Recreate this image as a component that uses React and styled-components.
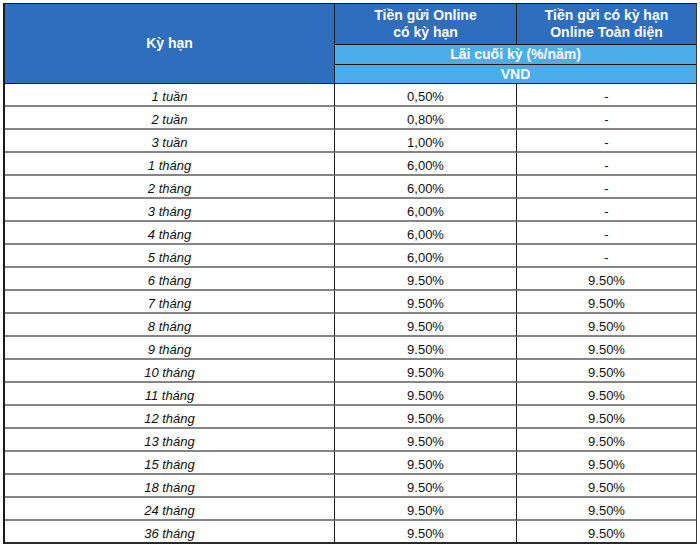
import React from 'react';
import styled, { createGlobalStyle } from 'styled-components';

const GlobalStyle = createGlobalStyle`
  html, body {
    margin: 0;
    padding: 0;
    background: #ffffff;
  }
  body {
    font-family: "Liberation Sans", Arial, sans-serif;
  }
`;

const Frame = styled.div`
  width: 700px;
  height: 548px;
  box-sizing: border-box;
  padding: 3px 4px 0 3px;
  background: #ffffff;
`;

const RateTable = styled.table`
  width: 694px;
  border-collapse: separate;
  border-spacing: 0;
  table-layout: fixed;
  border-top: 1px solid #1c1c1c;
  border-left: 2px solid #1c1c1c;
  border-right: 1px solid #3a3a3a;
`;

const HeadCell = styled.th`
  background: ${props => (props.$light ? '#4badea' : '#2e6ebd')};
  color: #ffffff;
  font-size: 14px;
  font-weight: bold;
  line-height: 17px;
  text-align: center;
  vertical-align: middle;
  padding: 0;
  border-bottom: 1px solid #1c1c1c;
  border-right: ${props => (props.$last ? '0' : '1px solid #1c1c1c')};
`;

const HeadRow = styled.tr`
  height: ${props => props.$h}px;
`;

const BodyRow = styled.tr`
  height: 23px;
`;

const Cell = styled.td`
  font-size: 13px;
  font-style: ${props => (props.$italic ? 'italic' : 'normal')};
  color: #111111;
  text-align: center;
  vertical-align: middle;
  padding: 4px 0 0;
  line-height: 15px;
  border-bottom: 2px solid ${props => (props.$end ? '#2a2a2a' : '#858585')};
  border-right: ${props => (props.$last ? '0' : '1px solid #1c1c1c')};
`;

const terms = [
  ['1 tuần', '0,50%', '-'],
  ['2 tuần', '0,80%', '-'],
  ['3 tuần', '1,00%', '-'],
  ['1 tháng', '6,00%', '-'],
  ['2 tháng', '6,00%', '-'],
  ['3 tháng', '6,00%', '-'],
  ['4 tháng', '6,00%', '-'],
  ['5 tháng', '6,00%', '-'],
  ['6 tháng', '9.50%', '9.50%'],
  ['7 tháng', '9.50%', '9.50%'],
  ['8 tháng', '9.50%', '9.50%'],
  ['9 tháng', '9.50%', '9.50%'],
  ['10 tháng', '9.50%', '9.50%'],
  ['11 tháng', '9.50%', '9.50%'],
  ['12 tháng', '9.50%', '9.50%'],
  ['13 tháng', '9.50%', '9.50%'],
  ['15 tháng', '9.50%', '9.50%'],
  ['18 tháng', '9.50%', '9.50%'],
  ['24 tháng', '9.50%', '9.50%'],
  ['36 tháng', '9.50%', '9.50%'],
];

const App = () => {
  return (
    <Frame>
      <GlobalStyle />
      <RateTable>
        <colgroup>
          <col style={{ width: 330 }} />
          <col style={{ width: 182 }} />
          <col />
        </colgroup>
        <thead>
          <HeadRow $h={41}>
            <HeadCell rowSpan={3}>Kỳ hạn</HeadCell>
            <HeadCell>Tiền gửi Online<br />có kỳ hạn</HeadCell>
            <HeadCell $last>Tiền gửi có kỳ hạn<br />Online Toàn diện</HeadCell>
          </HeadRow>
          <HeadRow $h={20}>
            <HeadCell colSpan={2} $light $last>Lãi cuối kỳ (%/năm)</HeadCell>
          </HeadRow>
          <HeadRow $h={19}>
            <HeadCell colSpan={2} $light $last>VND</HeadCell>
          </HeadRow>
        </thead>
        <tbody>
          {terms.map(([term, online, full], i) => {
            const end = i === terms.length - 1;
            return (
              <BodyRow key={term}>
                <Cell $italic $end={end}>{term}</Cell>
                <Cell $end={end}>{online}</Cell>
                <Cell $end={end} $last>{full}</Cell>
              </BodyRow>
            );
          })}
        </tbody>
      </RateTable>
    </Frame>
  );
};

export default App;
